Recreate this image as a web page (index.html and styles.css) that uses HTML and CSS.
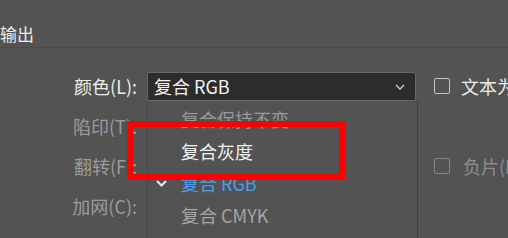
FILE: index.html
```html
<!DOCTYPE html>
<html lang="zh-CN">
<head>
    <meta charset="UTF-8">
    <title>输出</title>
    <link rel="stylesheet" href="styles.css">
</head>
<body>
    <div class="panel">
        <h2 class="section-title">输出</h2>
        <div class="output-form">
            <label class="field-label">颜色(L):</label>
            <div class="select">
                <span>复合 RGB</span>
                <svg class="chevron" width="10" height="6" viewBox="0 0 10 6"><path d="M1 1 L5 5 L9 1" fill="none" stroke="#cfcfcf" stroke-width="1.3"/></svg>
            </div>
            <div class="check-item">
                <span class="box"></span>
                <span>文本为黑色</span>
            </div>

            <label class="field-label disabled">陷印(T):</label>
            <div></div>
            <div></div>

            <label class="field-label disabled">翻转(F):</label>
            <div></div>
            <div class="check-item disabled">
                <span class="box"></span>
                <span>负片(I)</span>
            </div>

            <label class="field-label disabled">加网(C):</label>
            <div></div>
            <div></div>
        </div>

        <ul class="dropdown">
            <li class="option disabled">复合保持不变</li>
            <li class="option">复合灰度</li>
            <li class="option selected">
                <svg class="tick" width="11" height="8" viewBox="0 0 11 8"><path d="M1 2 L5.5 6.5 L10 2" fill="none" stroke="#e8e8e8" stroke-width="2"/></svg>
                复合 RGB
            </li>
            <li class="option muted">复合 CMYK</li>
        </ul>

        <div class="highlight"></div>
    </div>
</body>
</html>
```

FILE: styles.css
```css
body {
    margin: 0;
    background-color: #535353;
    font-family: "Noto Sans CJK SC", "Microsoft YaHei", sans-serif;
    font-size: 18px;
    color: #ececec;
    overflow: hidden;
}
.panel {
    position: relative;
    height: 238px;
}
.section-title {
    margin: 0;
    padding: 22px 0 1px 0;
    font-size: 17px;
    font-weight: normal;
    line-height: 24px;
    border-bottom: 1px solid #4a4a4a;
}
.output-form {
    display: grid;
    grid-template-columns: 137px 269px 1fr;
    grid-auto-rows: 40px;
    column-gap: 10px;
    align-items: center;
    padding-top: 18px;
    white-space: nowrap;
}
.field-label {
    text-align: right;
    color: #ececec;
}
.field-label.disabled {
    color: #9b9b9b;
}
.select {
    display: flex;
    align-items: center;
    justify-content: space-between;
    height: 29px;
    box-sizing: border-box;
    padding: 0 10px 0 6px;
    background-color: #2c2c2c;
    border: 1px solid #686868;
    border-radius: 2px;
    color: #f2f2f2;
}
.chevron {
    margin-top: 2px;
}
.check-item {
    display: flex;
    align-items: center;
    gap: 11px;
    margin-left: 8px;
    overflow: hidden;
}
.check-item .box {
    flex: none;
    width: 14px;
    height: 14px;
    border: 1.5px solid #c4c4c4;
    border-radius: 2px;
}
.check-item.disabled {
    color: #8e8e8e;
    gap: 13px;
}
.check-item.disabled .box {
    border-color: #858585;
}
.dropdown {
    position: absolute;
    left: 147px;
    top: 101px;
    width: 269px;
    height: 140px;
    margin: 0;
    padding: 2px 0 0 0;
    list-style: none;
    background-color: #535353;
    border-left: 1px solid #474747;
    border-right: 1px solid #3e3e3e;
}
.option {
    position: relative;
    height: 32px;
    line-height: 32px;
    padding-left: 33px;
    white-space: nowrap;
    color: #f2f2f2;
}
.option.disabled {
    color: #9a9a9a;
}
.option.muted {
    color: #a5a5a5;
}
.option.selected {
    color: #4d9ee8;
}
.tick {
    position: absolute;
    left: 8px;
    top: 12px;
}
.highlight {
    position: absolute;
    left: 127px;
    top: 121px;
    width: 218px;
    height: 59px;
    box-sizing: border-box;
    border: 6px solid #ff0000;
}
```
